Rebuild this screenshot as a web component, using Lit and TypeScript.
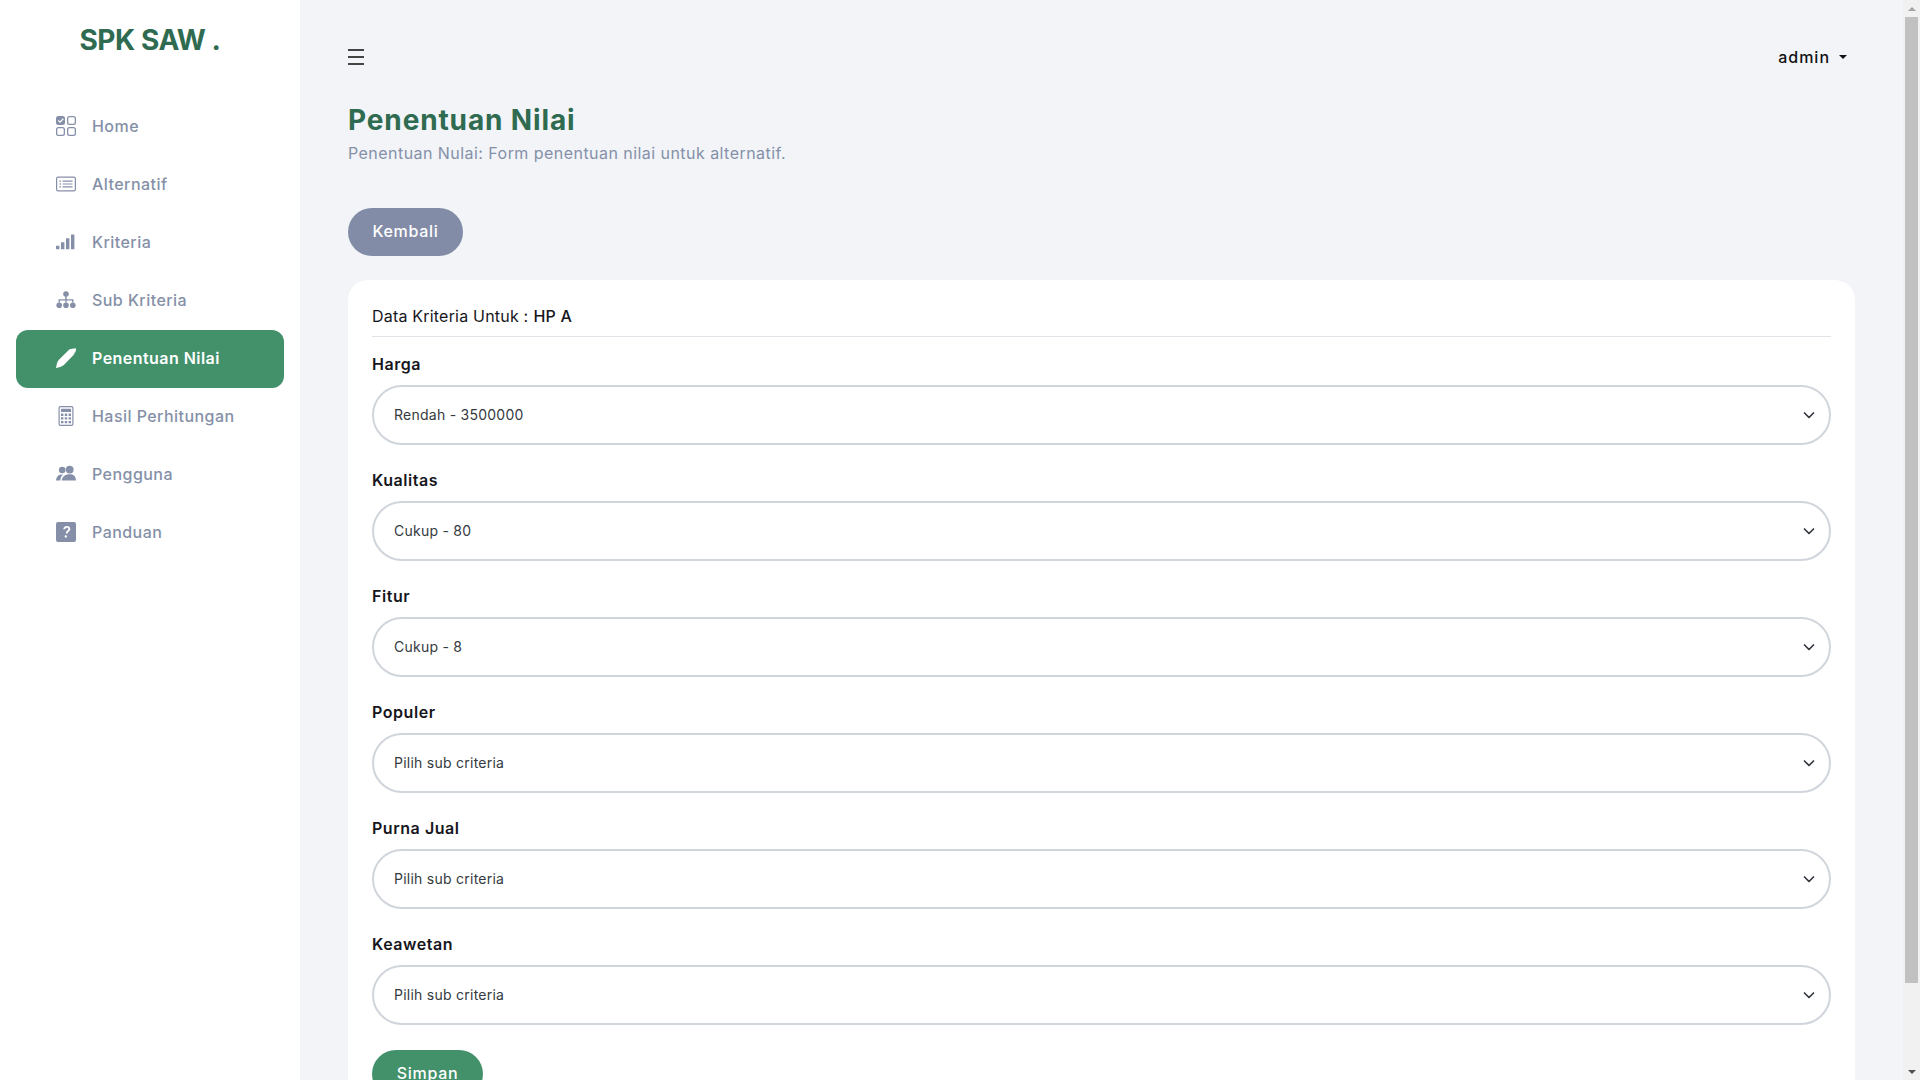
import { LitElement, html, css, svg } from "lit";
import { customElement } from "lit/decorators.js";

const ic: Record<string, unknown> = {
  home: svg`<path fill-rule="evenodd" d="M2.500 0h4A2.500 2.500 0 0 1 9 2.500v4A2.500 2.500 0 0 1 6.500 9h-4A2.500 2.500 0 0 1 0 6.500v-4A2.500 2.500 0 0 1 2.500 0zm4.400 2.300L4 5.200 2.700 3.900l-.9.900L4 7l3.800-3.800z"/><path fill-rule="evenodd" d="M13.500 0h4A2.500 2.500 0 0 1 20 2.500v4A2.500 2.500 0 0 1 17.500 9h-4A2.500 2.500 0 0 1 11 6.500v-4A2.500 2.500 0 0 1 13.500 0zm0 1.300a1.200 1.200 0 0 0-1.200 1.200v4a1.200 1.200 0 0 0 1.200 1.200h4a1.200 1.200 0 0 0 1.200-1.200v-4a1.200 1.200 0 0 0-1.200-1.200zM2.500 11h4A2.500 2.500 0 0 1 9 13.500v4A2.500 2.500 0 0 1 6.500 20h-4A2.500 2.500 0 0 1 0 17.500v-4A2.500 2.500 0 0 1 2.500 11zm0 1.300a1.200 1.200 0 0 0-1.200 1.200v4a1.200 1.200 0 0 0 1.200 1.200h4a1.200 1.200 0 0 0 1.200-1.200v-4a1.200 1.200 0 0 0-1.200-1.200zM13.500 11h4a2.500 2.500 0 0 1 2.500 2.500v4a2.500 2.500 0 0 1-2.500 2.500h-4a2.500 2.500 0 0 1-2.500-2.500v-4a2.500 2.500 0 0 1 2.500-2.500zm0 1.300a1.200 1.200 0 0 0-1.200 1.200v4a1.200 1.200 0 0 0 1.200 1.200h4a1.200 1.200 0 0 0 1.200-1.200v-4a1.200 1.200 0 0 0-1.200-1.200z"/>`,
  list: svg`<path fill-rule="evenodd" d="M2 2.500h16A2 2 0 0 1 20 4.500v11a2 2 0 0 1-2 2H2a2 2 0 0 1-2-2v-11a2 2 0 0 1 2-2zm0 1.200a.8.800 0 0 0-.8.800v11a.8.800 0 0 0 .8.800h16a.8.800 0 0 0 .8-.8v-11a.8.800 0 0 0-.8-.8z"/><path d="M6.500 6.500h10v1.200h-10zM6.500 9.400h10v1.200h-10zM6.500 12.300h10v1.200h-10z"/><circle cx="4.200" cy="7.100" r=".8"/><circle cx="4.200" cy="10" r=".8"/><circle cx="4.200" cy="12.900" r=".8"/>`,
  bars: svg`<rect x="0" y="13.700" width="3.400" height="3.600" rx=".4"/><rect x="5" y="10.200" width="3.400" height="7.100" rx=".4"/><rect x="10" y="6.200" width="3.400" height="11.100" rx=".4"/><rect x="15" y="2.400" width="3.400" height="14.900" rx=".4"/>`,
  tree: svg`<circle cx="10" cy="4" r="2.800"/><path d="M9.300 6h1.400v3.300h6.800v3.200h-1.400v-1.900h-5.400v1.900H9.300v-1.900H3.900v1.900H2.500V9.300h6.800z"/><circle cx="3.200" cy="15.200" r="2.800"/><circle cx="10" cy="15.200" r="2.800"/><circle cx="16.800" cy="15.200" r="2.800"/>`,
  pen: svg`<path d="M16.200.8 20 .3c.1 1.500-.2 2.900-.8 4.200l-1.100.2.500.6c-.4.800-.9 1.500-1.500 2.300L8.800 16c-1.200 1.300-2.800 2.400-4.700 3L.3 20 0 19.700l.8-3.800c.5-1.800 1.500-3.500 2.900-4.900L13 1.800C14 1.100 15 .8 16.200.8z"/>`,
  calc: svg`<path fill-rule="evenodd" d="M4.500 0h11A2 2 0 0 1 17.500 2v16a2 2 0 0 1-2 2h-11a2 2 0 0 1-2-2V2a2 2 0 0 1 2-2zm0 1.200a.8.800 0 0 0-.8.800v16a.8.800 0 0 0 .8.800h11a.8.800 0 0 0 .8-.8V2a.8.800 0 0 0-.8-.8z"/><rect x="5" y="2.700" width="10" height="3.400" rx=".4"/><path d="M5 7.500h2.400v2.400H5zM8.800 7.500h2.400v2.400H8.800zM12.600 7.500H15v2.400h-2.400zM5 11.200h2.400v2.400H5zM8.800 11.200h2.400v2.400H8.800zM12.600 11.200H15v2.400h-2.400zM5 14.900h2.400v2.400H5zM8.800 14.900h2.400v2.400H8.800zM12.600 14.900H15v2.400h-2.400z"/>`,
  users: svg`<circle cx="6.200" cy="6" r="3.300"/><circle cx="13.700" cy="5.600" r="3.900"/><path d="M0 16.500c.2-3 2.200-6 5.200-6h1.800c-1.700 1.500-2.500 3.600-2.700 6zM5.800 16.500c.1-3.500 3.300-6.200 7.900-6.200s6.200 2.700 6.300 6.200z"/>`,
  help: svg`<path fill-rule="evenodd" d="M2 0h16a2 2 0 0 1 2 2v16a2 2 0 0 1-2 2H2a2 2 0 0 1-2-2V2a2 2 0 0 1 2-2zm5.300 7.300h1.900c.1-1 .7-1.600 1.700-1.600s1.500.6 1.500 1.300c0 .7-.4 1.100-1.100 1.600-.9.600-1.300 1.300-1.300 2.300v.5h1.800v-.4c0-.6.200-.9 1-1.500.9-.6 1.500-1.400 1.500-2.600 0-1.800-1.400-2.900-3.400-2.900-2.200 0-3.500 1.300-3.600 3.300zM9.800 15.600a1.200 1.200 0 1 0 0-2.400 1.200 1.200 0 0 0 0 2.400z"/>`,
};

const nav = [
  ["home", "Home"], ["list", "Alternatif"], ["bars", "Kriteria"], ["tree", "Sub Kriteria"],
  ["pen", "Penentuan Nilai"], ["calc", "Hasil Perhitungan"], ["users", "Pengguna"], ["help", "Panduan"],
];
const fields = [
  ["Harga", "Rendah - 3500000"], ["Kualitas", "Cukup - 80"], ["Fitur", "Cukup - 8"],
  ["Populer", "Pilih sub criteria"], ["Purna Jual", "Pilih sub criteria"], ["Keawetan", "Pilih sub criteria"],
];

@customElement("app-root")
export class AppRoot extends LitElement {
  static styles = css`
    :host { display: flex; height: 100vh; overflow: hidden; font-family: Inter, "Noto Sans", sans-serif; }
    * { box-sizing: border-box; }
    .page { flex: 1; min-width: 0; overflow-y: auto; display: flex; align-items: flex-start; background: #f2f4f8; }
    .page::-webkit-scrollbar { display: none; }

    .sbar { flex: none; width: 17px; height: 100vh; background: #f1f1f1; display: flex; flex-direction: column; align-items: center; }
    .sbtn { flex: none; width: 17px; height: 17px; display: flex; align-items: center; justify-content: center; }
    .thumb { flex: none; width: 13px; height: 966px; background: #c1c1c1; }
    .spacer { flex: 1; }
    .up { width: 0; height: 0; border: 4px solid transparent; border-top: 0; border-bottom-color: #a3a3a3; }
    .down { width: 0; height: 0; border: 4px solid transparent; border-bottom: 0; border-top-color: #505050; }

    .side { width: 300px; flex: none; align-self: stretch; background: #fff; padding: 0 16px; }
    .logo { height: 98px; padding-top: 21px; text-align: center; font-size: 28px; line-height: 38px; font-weight: 700; color: #2f6b50; letter-spacing: -.45px; }
    .nav { display: flex; flex-direction: column; }
    .item { height: 58px; display: flex; align-items: center; gap: 16px; padding: 0 0 2px 40px; border-radius: 12px; color: #8590a8; font-size: 16px; font-weight: 500; letter-spacing: .45px; }
    .item svg { width: 20px; height: 20px; fill: currentColor; flex: none; }
    .item.on { background: #42916b; color: #fff; font-weight: 600; }

    .main { flex: 1; min-width: 0; padding: 0 48px 48px; }
    .top { height: 98px; display: flex; align-items: center; justify-content: space-between; padding-top: 16px; }
    .burger { display: flex; flex-direction: column; gap: 5px; width: 16px; }
    .burger i { display: block; height: 2px; background: #444; }
    .user { display: flex; align-items: center; gap: 9px; margin-right: 8px; font-size: 16px; font-weight: 500; color: #111; letter-spacing: 1px; }
    .caret { width: 0; height: 0; border: 4px solid transparent; border-top-color: #111; border-bottom: 0; }
    h1 { margin: 0; font-size: 28px; line-height: 44px; font-weight: 700; color: #2f6b50; letter-spacing: .87px; }
    .sub { margin: 0 0 44px; font-size: 16px; line-height: 22px; color: #8590a8; letter-spacing: .45px; }
    .btn { display: flex; align-items: center; justify-content: center; height: 48px; padding-bottom: 2px; border-radius: 24px; color: #fff; font-size: 16px; font-weight: 500; letter-spacing: .7px; }
    .back { width: 115px; background: #828ca6; margin-bottom: 24px; }
    .save { width: 111px; background: #42916b; margin-top: 25px; }
    .card { background: #fff; border-radius: 20px; padding: 24px; }
    .head { height: 33px; padding-bottom: 9px; border-bottom: 1px solid #e3e2e8; display: flex; align-items: center; font-size: 16px; color: #16161d; margin-bottom: 15px; font-weight: 400; letter-spacing: .2px; }
    .head b { font-weight: 500; margin-left: 5px; }
    .field { margin-bottom: 23px; }
    .field:last-of-type { margin-bottom: 0; }
    label { display: block; font-size: 16px; line-height: 24px; font-weight: 600; color: #16161d; margin-bottom: 9px; letter-spacing: .55px; }
    .wrap { position: relative; }
    select { display: block; width: 100%; height: 60px; appearance: none; -webkit-appearance: none; background: #fff; border: 2px solid #d0d5dc; border-radius: 30px; padding: 0 20px 1px; font: 400 14px Inter, "Noto Sans", sans-serif; letter-spacing: .25px; color: #343a40; outline: none; }
    .chev { position: absolute; right: 14px; top: 22px; width: 16px; height: 16px; fill: none; stroke: #343a40; stroke-width: 1.7; stroke-linecap: round; stroke-linejoin: round; pointer-events: none; }
  `;

  render() {
    return html`<div class="page">
      <aside class="side">
        <div class="logo">SPK SAW .</div>
        <nav class="nav">
          ${nav.map(([k, t]) => html`<div class="item ${t === "Penentuan Nilai" ? "on" : ""}">
            <svg viewBox="0 0 20 20">${ic[k]}</svg><span>${t}</span></div>`)}
        </nav>
      </aside>
      <main class="main">
        <div class="top">
          <div class="burger"><i></i><i></i><i></i></div>
          <div class="user">admin<span class="caret"></span></div>
        </div>
        <h1>Penentuan Nilai</h1>
        <p class="sub">Penentuan Nulai: Form penentuan nilai untuk alternatif.</p>
        <div class="btn back">Kembali</div>
        <section class="card">
          <div class="head">Data Kriteria Untuk :<b>HP A</b></div>
          ${fields.map(([l, v]) => html`<div class="field"><label>${l}</label>
            <div class="wrap"><select><option>${v}</option></select>
            <svg class="chev" viewBox="0 0 16 16"><path d="M3.500 6l4.500 4.500L12.500 6"/></svg></div></div>`)}
          <div class="btn save">Simpan</div>
        </section>
      </main>
    </div>
    <div class="sbar" aria-hidden="true">
      <div class="sbtn"><span class="up"></span></div>
      <div class="thumb"></div>
      <div class="spacer"></div>
      <div class="sbtn"><span class="down"></span></div>
    </div>`;
  }
}
